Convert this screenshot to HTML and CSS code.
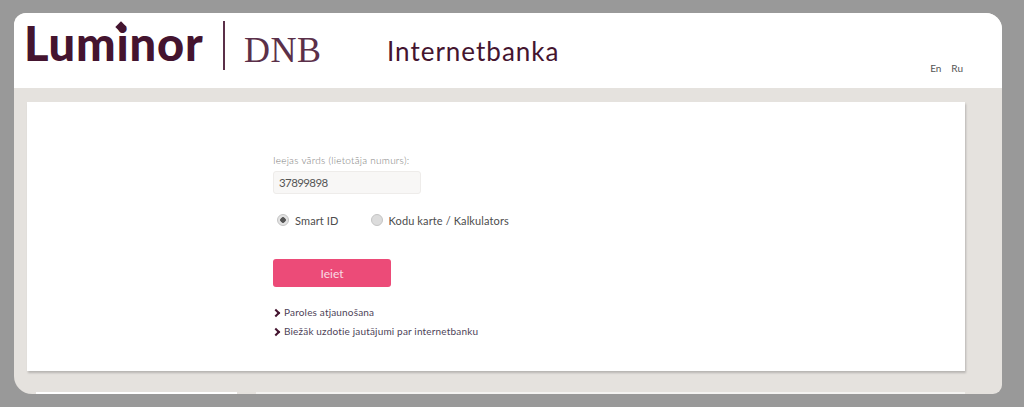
FILE: index.html
```html
<!DOCTYPE html>
<html lang="en">
<head>
    <meta charset="UTF-8">
    <meta name="viewport" content="width=device-width, initial-scale=1.0">
    <title>Luminor DNB Internetbanka</title>
    <link rel="stylesheet" href="styles.css">
</head>
<body>
    <div class="window">
        <!-- Header -->
        <header class="header">
            <div class="logo">
                <span class="logo-name">Luminor<span class="logo-dot"></span></span>
                <span class="logo-line"></span>
                <span class="logo-dnb">DNB</span>
            </div>
            <h1>Internetbanka</h1>
            <div class="lang">
                <a href="#">En</a>
                <a href="#">Ru</a>
            </div>
        </header>

        <!-- Login card -->
        <main class="content">
            <div class="card">
                <form class="login-form">
                    <label for="user">Ieejas vārds (lietotāja numurs):</label>
                    <input type="text" id="user" value="37899898">

                    <div class="radios">
                        <label class="radio"><span class="dot checked"></span>Smart ID</label>
                        <label class="radio"><span class="dot"></span>Kodu karte / Kalkulators</label>
                    </div>

                    <button type="button">Ieiet</button>

                    <ul class="links">
                        <li><a href="#">Paroles atjaunošana</a></li>
                        <li><a href="#">Biežāk uzdotie jautājumi par internetbanku</a></li>
                    </ul>
                </form>
            </div>
        </main>

        <!-- Footer edge -->
        <div class="footer-edge">
            <span class="edge-left"></span>
            <span class="edge-right"></span>
        </div>
    </div>
</body>
</html>
```

FILE: styles.css
```css
/* Basic page */
body {
    font-family: Lato, "Open Sans", sans-serif;
    background-color: #999999;
    margin: 0;
    padding: 13px 22px 13px 14px;
    height: 381px;
    overflow: hidden;
}

.window {
    height: 381px;
    background-color: #e5e2de;
    border-radius: 12px 16px 9px 18px;
    overflow: hidden;
    display: flex;
    flex-direction: column;
}

/* Header */
.header {
    height: 75px;
    background-color: white;
    display: flex;
    align-items: flex-start;
    position: relative;
    flex-shrink: 0;
}

.logo {
    display: flex;
    align-items: flex-start;
    width: 309px;
    margin-left: 10px;
    color: #44142f;
}

.logo-name {
    font-size: 47px;
    font-weight: 900;
    line-height: 56px;
    margin-top: 2px;
    letter-spacing: 0.85px;
    width: 199px;
    position: relative;
}

.logo-dot {
    position: absolute;
    left: 93px;
    top: 8px;
    width: 8px;
    height: 8px;
    background-color: #44142f;
    transform: rotate(45deg);
}

.logo-line {
    width: 2px;
    height: 49px;
    margin: 8px 0 0 0;
    background-color: #5b3049;
}

.logo-dnb {
    font-family: "Liberation Serif", serif;
    font-size: 36px;
    line-height: 40px;
    margin: 17px 0 0 19px;
    letter-spacing: 0.5px;
    color: #5b3049;
}

h1 {
    font-size: 26px;
    font-weight: 400;
    line-height: 32px;
    margin: 22px 0 0 54px;
    color: #44142f;
    letter-spacing: 1px;
}

.lang {
    margin-left: auto;
    margin-right: 39px;
    margin-top: 49px;
    display: flex;
    gap: 10px;
    font-size: 10px;
    line-height: 12px;
}

.lang a {
    color: #555555;
    text-decoration: none;
}

/* Card */
.content {
    flex: 1;
    padding: 14px 37px 0 13px;
}

.card {
    height: 269px;
    background-color: white;
    box-shadow: 1px 2px 2px rgba(0, 0, 0, 0.2);
    padding: 52px 0 0 246px;
    box-sizing: border-box;
}

.login-form {
    display: flex;
    flex-direction: column;
    align-items: flex-start;
}

.login-form > label {
    font-size: 10px;
    font-weight: 300;
    line-height: 12px;
    color: #7c7c7c;
    letter-spacing: 0.25px;
}

input {
    width: 148px;
    height: 23px;
    box-sizing: border-box;
    margin-top: 5px;
    padding: 0 5px;
    background-color: #f8f7f6;
    border: 1px solid #eeecea;
    border-radius: 3px;
    font-family: inherit;
    font-size: 11.5px;
    letter-spacing: -0.6px;
    color: #555555;
}

.radios {
    display: flex;
    gap: 28px;
    margin-top: 20px;
}

.radio {
    display: flex;
    align-items: center;
    gap: 6px;
    font-size: 11px;
    line-height: 14px;
    letter-spacing: 0.12px;
    color: #4d4d4d;
}

.dot {
    width: 12px;
    height: 12px;
    box-sizing: border-box;
    margin-top: -3px;
    margin-left: 4px;
    border-radius: 50%;
    background-color: #dcdcdc;
    border: 1px solid #c4c4c4;
}

.dot.checked {
    background: radial-gradient(circle, #555555 0 2.5px, #e2e2e2 3px);
}

button {
    width: 118px;
    height: 28px;
    margin-top: 31px;
    background-color: #ec4b78;
    color: #f9dbe3;
    border: none;
    border-radius: 3px;
    font-family: inherit;
    font-size: 12px;
    font-weight: 400;
    cursor: pointer;
}

.links {
    list-style: none;
    margin: 16px 0 0;
    padding: 0;
}

.links li {
    font-size: 10px;
    line-height: 19px;
    letter-spacing: 0.17px;
    display: flex;
    align-items: center;
}

.links li::before {
    content: "";
    width: 4px;
    height: 4px;
    margin-right: 5px;
    border-top: 2px solid #44142f;
    border-right: 2px solid #44142f;
    transform: rotate(45deg);
}

.links a {
    color: #4d4358;
    text-decoration: none;
}

/* White strips along the bottom edge */
.footer-edge {
    height: 2px;
    display: flex;
    flex-shrink: 0;
    padding-left: 22px;
}

.edge-left {
    width: 201px;
    background-color: white;
}

.edge-right {
    width: 709px;
    margin-left: 19px;
    background-color: #f4f3f1;
}
```
